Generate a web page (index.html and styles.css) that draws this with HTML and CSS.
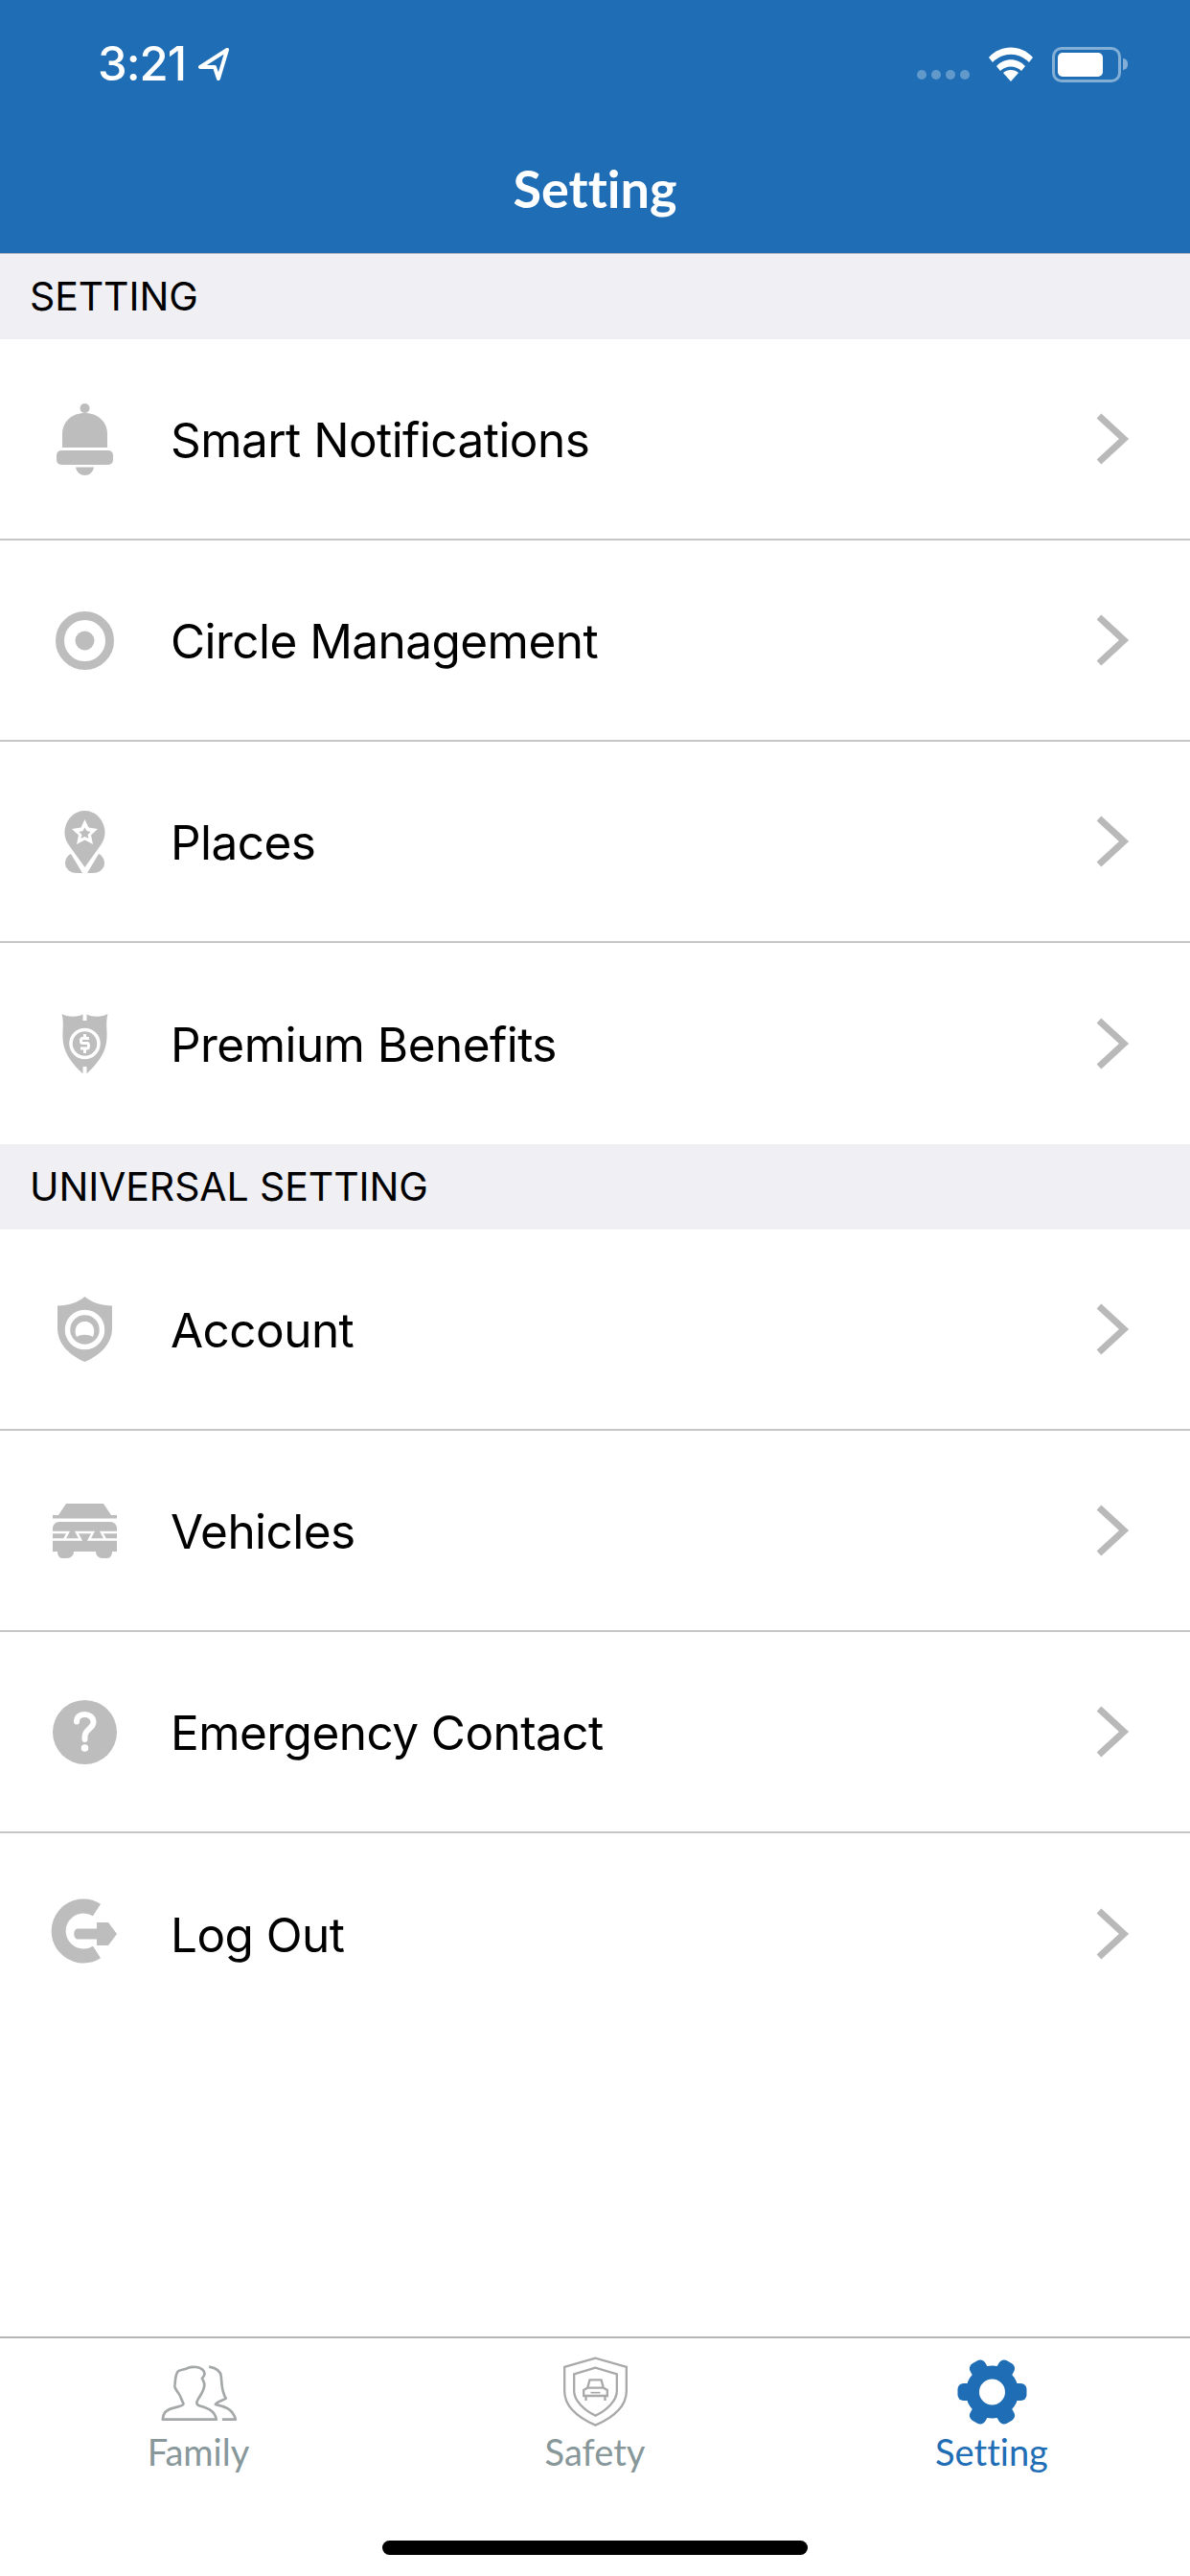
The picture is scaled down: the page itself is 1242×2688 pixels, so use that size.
FILE: index.html
```html
<!DOCTYPE html>
<html lang="en">
<head>
<meta charset="utf-8">
<title>Setting</title>
<link rel="stylesheet" href="styles.css">
</head>
<body>
<div class="app">
  <header class="top">
    <div class="status">
      <div class="status-left">
        <span class="time">3:21</span>
        <svg class="loc" viewBox="0 0 32 34"><path d="M30 2 L2 20 L17 20 L21 32 Z" fill="none" stroke="#fff" stroke-width="4" stroke-linejoin="round"/></svg>
      </div>
      <div class="status-right">
        <div class="dots"><i></i><i></i><i></i><i></i></div>
        <svg class="wifi" viewBox="0 0 48 36"><path d="M1 11 C13 -3 35 -3 47 11 L43 16 C32 5 16 5 5 16 Z" fill="#fff"/><path d="M9 20 C17 11 31 11 39 20 L35 25 C29 19 19 19 13 25 Z" fill="#fff"/><path d="M16 27 C20 23 28 23 32 27 L24 36 Z" fill="#fff"/></svg>
        <div class="battery"><div class="battery-fill"></div></div>
        <div class="battery-tip"></div>
      </div>
    </div>
    <h1 class="title">Setting</h1>
  </header>

  <main class="list">
    <div class="section">SETTING</div>
    <div class="row">
      <svg class="icon" viewBox="0 8 120 120"><g fill="#bdbdbd"><circle cx="58.5" cy="36" r="5"/><path d="M35 77V63C35 50 45 41 58.5 41C72 41 82 50 82 63V77Z"/><rect x="29" y="80" width="59" height="15" rx="5"/><path d="M49 97.5H68C67 103 63 106 58.5 106C54 106 50 103 49 97.5Z"/></g></svg>
      <span class="label">Smart Notifications</span>
      <svg class="chev" viewBox="0 0 36 54"><path d="M4 3 L30 27 L4 51" fill="none" stroke="#b9b9b9" stroke-width="7"/></svg>
    </div>
    <div class="row">
      <svg class="icon" viewBox="0 -2 120 120"><circle cx="58.5" cy="58.5" r="26" fill="none" stroke="#bdbdbd" stroke-width="9"/><circle cx="58.5" cy="58.5" r="10" fill="#bdbdbd"/></svg>
      <span class="label">Circle Management</span>
      <svg class="chev" viewBox="0 0 36 54"><path d="M4 3 L30 27 L4 51" fill="none" stroke="#b9b9b9" stroke-width="7"/></svg>
    </div>
    <div class="row">
      <svg class="icon" viewBox="0 -2 120 120"><path d="M58.500 85L42 62C36 54 37.500 46 38 44C40 34 48 26 58.500 26C69 26 77 34 79 44C79.500 46 81 54 75 62Z" fill="#bdbdbd"/><path d="M58.500 35L62.500 43.500L72 45L65 51.500L67 61L58.500 56.500L50 61L52 51.500L45 45L54.500 43.500Z" fill="#fff"/><path d="M58.500 43.500L60.500 47L64.500 48L61.500 51L62.500 55L58.500 53L54.500 55L55.500 51L52.500 48L56.500 47Z" fill="#bdbdbd"/><path d="M44 71L56 91H50C43 91 38 86 38 81C38 77 40 73 44 71Z" fill="#bdbdbd"/><path d="M73 71L61 91H67C74 91 79 86 79 81C79 77 77 73 73 71Z" fill="#bdbdbd"/></svg>
      <span class="label">Places</span>
      <svg class="chev" viewBox="0 0 36 54"><path d="M4 3 L30 27 L4 51" fill="none" stroke="#b9b9b9" stroke-width="7"/></svg>
    </div>
    <div class="row row-last">
      <svg class="icon" viewBox="0 -2 120 120"><path d="M34.500 27C41 30.500 50 30.500 56.500 27.500V34H60.500V27.500C67 30.500 76 30.500 82.500 27C81 32 81 38 81.500 45C82 60 80 71 60.500 89.500V82H56.500V89.500C37 71 35 60 35.500 45C36 38 36 32 34.500 27Z" fill="#bdbdbd"/><circle cx="58.500" cy="58" r="14.500" fill="none" stroke="#fff" stroke-width="3.500"/><path d="M63 52.500H56C54 52.500 54 57.500 56 57.500H61C63 57.500 63 63 61 63H54M58.500 48V52M58.500 63V68" fill="none" stroke="#fff" stroke-width="3"/></svg>
      <span class="label">Premium Benefits</span>
      <svg class="chev" viewBox="0 0 36 54"><path d="M4 3 L30 27 L4 51" fill="none" stroke="#b9b9b9" stroke-width="7"/></svg>
    </div>

    <div class="section">UNIVERSAL SETTING</div>
    <div class="row">
      <svg class="icon" viewBox="0 -2 120 120"><path d="M58.500 24C51 30 42 33.500 30 33.500V57C30 73 42 85 58.500 92C75 85 87 73 87 57V33.500C75 33.500 66 30 58.500 24Z" fill="#bdbdbd"/><circle cx="58.500" cy="58.500" r="18" fill="#bdbdbd" stroke="#fff" stroke-width="5.500"/><path d="M50 66C47 60 49 50 58.500 50C68 50 70 60 67 66C62 63 55 63 50 66Z" fill="#fff"/></svg>
      <span class="label">Account</span>
      <svg class="chev" viewBox="0 0 36 54"><path d="M4 3 L30 27 L4 51" fill="none" stroke="#b9b9b9" stroke-width="7"/></svg>
    </div>
    <div class="row">
      <svg class="icon" viewBox="0 -2 120 120"><g fill="#bdbdbd"><path d="M39 30H78L86 42H92V45.500H25V42H31Z"/><path d="M32 49H85C89 49 92 52 92 56V80H25V56C25 52 28 49 32 49Z"/><path d="M30 80H47C47 84 44 87 40 87H35C32 87 30 84 30 80ZM70 80H87C87 84 85 87 82 87H77C73 87 70 84 70 80Z"/></g><path d="M20 60H41L37 67.500H54L50 60H67L63 67.500H80L76 60H97M20 67.500H37M80 67.500H97" fill="none" stroke="#fff" stroke-width="2.500"/></svg>
      <span class="label">Vehicles</span>
      <svg class="chev" viewBox="0 0 36 54"><path d="M4 3 L30 27 L4 51" fill="none" stroke="#b9b9b9" stroke-width="7"/></svg>
    </div>
    <div class="row">
      <svg class="icon" viewBox="0 -2 120 120"><circle cx="58.500" cy="58.500" r="33.500" fill="#bdbdbd"/><path d="M50 47.500C50 42 54 40 58.500 40C63 40 67.500 43 67.500 48C67.500 55 58.500 55 58.500 63V66" fill="none" stroke="#fff" stroke-width="6" stroke-linecap="round"/><circle cx="58.500" cy="75" r="3.800" fill="#fff"/></svg>
      <span class="label">Emergency Contact</span>
      <svg class="chev" viewBox="0 0 36 54"><path d="M4 3 L30 27 L4 51" fill="none" stroke="#b9b9b9" stroke-width="7"/></svg>
    </div>
    <div class="row row-last">
      <svg class="icon" viewBox="0 -2 120 120"><path d="M71 33A26 26 0 1 0 71 77" fill="none" stroke="#bdbdbd" stroke-width="15"/><path d="M51 52.500H71V46H83L92 58L83 70H71V63.500H51C46 63.500 46 52.500 51 52.500Z" fill="#bdbdbd"/></svg>
      <span class="label">Log Out</span>
      <svg class="chev" viewBox="0 0 36 54"><path d="M4 3 L30 27 L4 51" fill="none" stroke="#b9b9b9" stroke-width="7"/></svg>
    </div>
  </main>

  <footer class="tabbar">
    <div class="tabs">
      <div class="tab">
        <svg class="tab-icon" viewBox="100 54 260 240"><path d="M117 254C118 235 130 222 150 218C165 214 182 212 182 205C175 190 170 175 165 170C158 160 152 150 155 145C157 135 155 115 165 103C175 98 190 97 195 93C210 87 235 88 245 102C250 110 248 118 240 125C245 135 250 140 247 150C245 165 238 175 228 190C222 200 220 208 235 212C255 218 280 225 285 254Z" fill="none" stroke="#a4a8a8" stroke-width="8" stroke-linejoin="round"/><path d="M262 89C280 92 298 98 300 120C302 140 300 165 315 188C305 195 285 198 282 207C300 212 335 215 345 254H303" fill="none" stroke="#a4a8a8" stroke-width="8" stroke-linejoin="round"/></svg>
        <span class="tab-label">Family</span>
      </div>
      <div class="tab">
        <svg class="tab-icon" viewBox="60 54 240 240"><path d="M180 62L83 90V165C83 215 130 250 180 272C230 250 277 215 277 165V90Z" fill="none" stroke="#a9a9a9" stroke-width="7"/><path d="M180 92L113 112V165C113 195 145 225 180 242C215 225 247 195 247 165V112Z" fill="none" stroke="#a9a9a9" stroke-width="7"/><path d="M155 155L162 130H198L205 155M143 180V162L155 155H205L217 162V180ZM150 180V195M210 180V195" fill="none" stroke="#a9a9a9" stroke-width="7"/><path d="M165 170H195" stroke="#a9a9a9" stroke-width="5"/></svg>
        <span class="tab-label">Safety</span>
      </div>
      <div class="tab tab-active">
        <svg class="tab-icon" viewBox="-40 -38 80 80"><circle r="20.500" fill="none" stroke="#1e6db5" stroke-width="14"/><g fill="#1e6db5"><rect x="-9" y="-36" width="18" height="16" rx="6" transform="rotate(30)"/><rect x="-9" y="-36" width="18" height="16" rx="6" transform="rotate(90)"/><rect x="-9" y="-36" width="18" height="16" rx="6" transform="rotate(150)"/><rect x="-9" y="-36" width="18" height="16" rx="6" transform="rotate(210)"/><rect x="-9" y="-36" width="18" height="16" rx="6" transform="rotate(270)"/><rect x="-9" y="-36" width="18" height="16" rx="6" transform="rotate(330)"/></g></svg>
        <span class="tab-label">Setting</span>
      </div>
    </div>
    <div class="home"></div>
  </footer>
</div>
</body>
</html>
```
FILE: styles.css
```css
* { box-sizing: border-box; margin: 0; padding: 0; }
html, body { width: 1242px; height: 2688px; background: #fff; overflow: hidden; }
.app { width: 1242px; height: 2688px; display: flex; flex-direction: column; font-family: Inter, "Liberation Sans", sans-serif; color: #000; font-variant-ligatures: none; }

.top { height: 265px; background: #1e6db5; border-bottom: 1px solid #a9b4bf; color: #fff; padding-top: 42px; }
.status { height: 50px; display: flex; justify-content: space-between; align-items: center; padding: 0 65px 0 102px; }
.status-left { display: flex; align-items: center; gap: 13px; }
.time { font-size: 49px; font-weight: 500; line-height: 50px; letter-spacing: -1px; }
.loc { width: 32px; height: 34px; display: block; }
.status-right { display: flex; align-items: center; }
.dots { display: flex; gap: 5px; margin: 22px 19px 0 0; }
.dots i { display: block; width: 10px; height: 10px; border-radius: 5px; background: rgba(255,255,255,.3); }
.wifi { width: 48px; height: 36px; display: block; margin-right: 19px; }
.battery { width: 72px; height: 37px; border: 3px solid rgba(255,255,255,.45); border-radius: 10px; padding: 3px; }
.battery-fill { width: 47px; height: 25px; background: #fff; border-radius: 5px; }
.battery-tip { width: 5px; height: 12px; margin-left: 2px; border-radius: 0 5px 5px 0; background: rgba(255,255,255,.45); }
.title { margin-top: 74px; text-align: center; font-family: Lato, sans-serif; font-size: 54px; line-height: 62px; font-weight: 700; }

.list { flex: 1; }
.section { height: 89px; background: #efeff4; padding-left: 31px; font-size: 41px; line-height: 89px; letter-spacing: -.1px; }
.row { height: 210px; display: flex; align-items: center; border-bottom: 2px solid #c6c6c8; padding-left: 30px; padding-right: 63px; }
.row-last { border-bottom: 0; }
.icon { width: 120px; height: 120px; display: block; flex: none; }
.label { flex: 1; margin-left: 28px; padding-top: 2px; font-size: 49.500px; line-height: 60px; letter-spacing: -.55px; }
.chev { width: 36px; height: 54px; display: block; flex: none; }

.tabbar { height: 250px; border-top: 2px solid #b5b5b5; display: flex; flex-direction: column; background: #fff; }
.tabs { display: flex; padding-top: 18px; }
.tab { flex: 1; display: flex; flex-direction: column; align-items: center; }
.tab-icon { width: 87px; height: 80px; display: block; }
.tab-label { margin-top: -3px; font-family: Lato, sans-serif; font-size: 38px; line-height: 46px; color: #87979a; }
.tab-active .tab-label { color: #1e6db5; }
.home { width: 444px; height: 15px; border-radius: 8px; background: #000; margin: 70px auto 0; }
```
